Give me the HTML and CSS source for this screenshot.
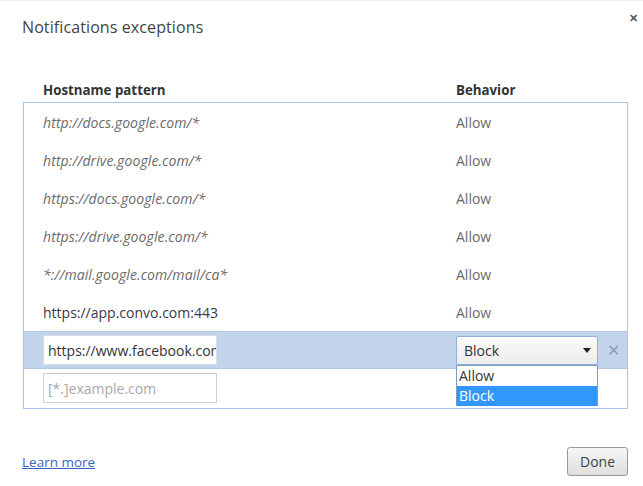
FILE: index.html
```html
<!DOCTYPE html>
<html>
<head>
<meta charset="utf-8">
<link rel="stylesheet" href="styles.css">
</head>
<body>
<div class="dialog">
  <div class="head">
    <h1 class="title">Notifications exceptions</h1>
    <span class="close">&#x2715;</span>
  </div>
  <div class="cols">
    <span class="col-host">Hostname pattern</span>
    <span class="col-beh">Behavior</span>
  </div>
  <div class="list">
    <div class="row"><span class="host it">http://docs.google.com/*</span><span class="beh">Allow</span></div>
    <div class="row"><span class="host it">http://drive.google.com/*</span><span class="beh">Allow</span></div>
    <div class="row"><span class="host it">https://docs.google.com/*</span><span class="beh">Allow</span></div>
    <div class="row"><span class="host it">https://drive.google.com/*</span><span class="beh">Allow</span></div>
    <div class="row"><span class="host it">*://mail.google.com/mail/ca*</span><span class="beh">Allow</span></div>
    <div class="row"><span class="host plain">https://app.convo.com:443</span><span class="beh">Allow</span></div>
    <div class="row sel">
      <div class="field"><span class="field-text">https://www.facebook.com</span></div>
      <div class="select-wrap">
        <div class="select"><span>Block</span><span class="arrow"></span></div>
        <div class="menu">
          <div class="opt">Allow</div>
          <div class="opt on">Block</div>
        </div>
      </div>
      <span class="del">&#x2715;</span>
    </div>
    <div class="row">
      <div class="field empty"><span class="ph">[*.]example.com</span></div>
    </div>
  </div>
  <div class="foot">
    <a class="learn" href="#">Learn more</a>
    <button class="done">Done</button>
  </div>
</div>
</body>
</html>
```

FILE: styles.css
```css
* { box-sizing: border-box; }
html, body { margin: 0; padding: 0; background: #fff; }
body { font-family: "Open Sans", "Noto Sans", sans-serif; color: #333; }
.dialog { width: 643px; height: 486px; display: flex; flex-direction: column; border-top: 1px solid #eef0f2; }
.head { display: flex; justify-content: space-between; align-items: flex-start; padding: 0 5px 0 22px; height: 77px; }
.title { margin: 16px 0 0; font-size: 16px; font-weight: 400; color: #444; line-height: 20px; letter-spacing: 0.1px; }
.close { margin-top: 10px; font-size: 11px; font-weight: 700; color: #555; line-height: 14px; }
.cols { display: flex; padding-left: 43px; height: 24px; align-items: center; font-weight: 700; font-size: 13.3px; color: #333; }
.col-host { width: 413px; }
.list { margin: 0 15px 0 23px; border: 1px solid #a9c4e6; height: 307px; display: flex; flex-direction: column; }
.row { height: 38px; flex: none; display: flex; align-items: center; padding-left: 19px; font-size: 14px; position: relative; }
.host { width: 413px; }
.it { font-style: italic; color: #6a6a6a; letter-spacing: 0.1px; }
.plain { color: #3a3848; }
.beh { color: #6a6a6a; }
.sel { background: #c2d4ec; border-top: 1px solid #b3c9e6; border-bottom: 1px solid #b3c9e6; }
.field { width: 174px; height: 30px; border: 1px solid #d8dde6; background: #fff; display: flex; align-items: center; padding-left: 4px; overflow: hidden; white-space: nowrap; margin-right: 239px; }
.field-text { color: #333; font-size: 14px; }
.field.empty { border-color: #cfcfcf; }
.ph { color: #a8a8a8; font-size: 14px; }
.select-wrap { position: relative; width: 142px; height: 29px; }
.select { height: 29px; border: 1px solid #8fb0d8; border-radius: 2px; background: linear-gradient(#fbfbfb, #ececec); display: flex; align-items: center; justify-content: space-between; padding: 0 6px 0 7px; font-size: 14px; color: #333; }
.arrow { width: 0; height: 0; border-left: 4px solid transparent; border-right: 4px solid transparent; border-top: 5px solid #222; }
.menu { position: absolute; left: 0; top: 29px; width: 142px; border: 1px solid #7f9db9; border-bottom: 0; background: #fff; z-index: 2; }
.opt { height: 20px; line-height: 20px; padding-left: 2px; font-size: 14px; color: #333; }
.opt.on { background: #3297fd; color: #fff; }
.del { margin-left: 9px; font-size: 16px; color: #8a9cb4; }
.foot { display: flex; justify-content: space-between; align-items: center; padding: 38px 15px 0 22px; }
.learn { color: #3a62c8; font-size: 13.5px; }
.done { width: 61px; height: 29px; border: 1px solid #9a9a9a; border-radius: 3px; background: linear-gradient(#f6f6f6, #dedede); font-family: inherit; font-size: 14px; color: #444; padding: 0; }
```
